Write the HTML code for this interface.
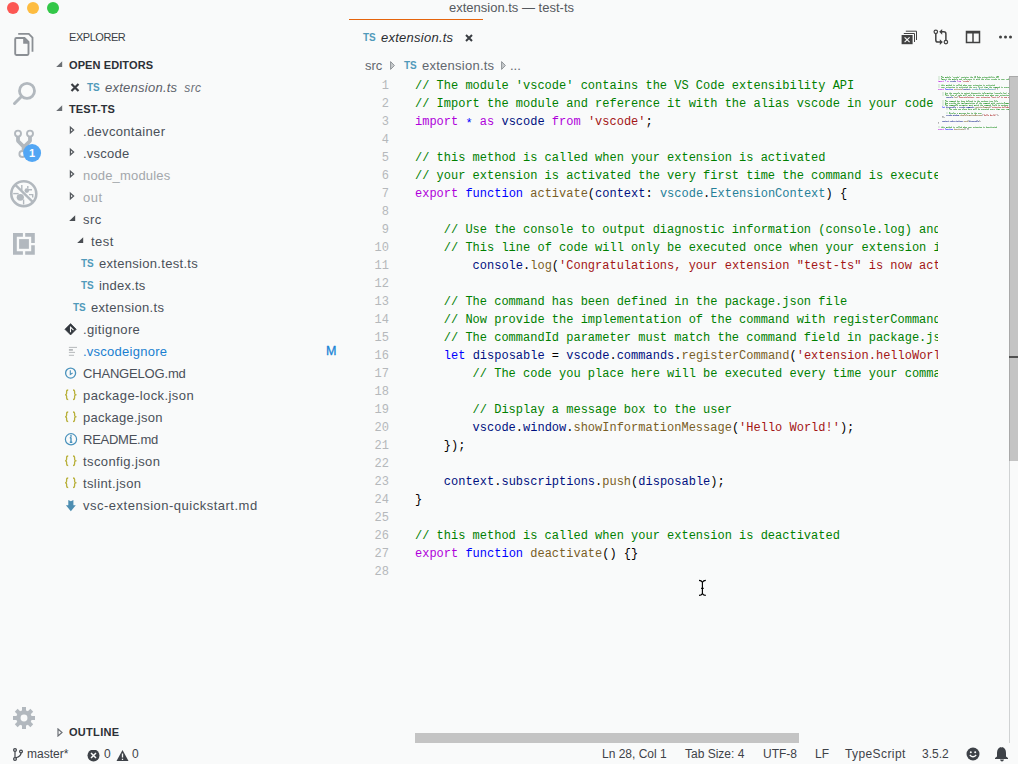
<!DOCTYPE html>
<html><head><meta charset="utf-8"><style>
html,body{margin:0;padding:0;}
body{width:1018px;height:764px;overflow:hidden;background:#f9fafa;position:relative;font-family:"Liberation Sans",sans-serif;}
.abs{position:absolute;}
.row{position:absolute;height:22px;line-height:22px;font-size:13px;white-space:nowrap;letter-spacing:0.3px}
.ts{position:absolute;height:22px;line-height:22px;font-size:10px;font-weight:bold;color:#519aba;letter-spacing:-0.2px}
.js{position:absolute;height:22px;line-height:22px;font-size:11px;font-weight:bold;color:#bcb33e;letter-spacing:-0.5px}
.cl{position:absolute;left:415px;height:18px;line-height:18px;font-family:"Liberation Mono",monospace;font-size:12px;white-space:pre;}
.ln{position:absolute;left:340px;width:49px;text-align:right;height:18px;line-height:18px;font-family:"Liberation Mono",monospace;font-size:12px;color:#b5b8bb}
.st{position:absolute;top:744px;height:20px;line-height:20px;font-size:12px;color:#3e4248;white-space:nowrap}
</style></head><body>
<!-- traffic lights -->
<div class="abs" style="left:7px;top:2px;width:12px;height:12px;border-radius:50%;background:#fc5753"></div>
<div class="abs" style="left:27px;top:2px;width:12px;height:12px;border-radius:50%;background:#fdbc40"></div>
<div class="abs" style="left:47px;top:2px;width:12px;height:12px;border-radius:50%;background:#33c748"></div>
<!-- title -->
<div class="abs" style="left:449px;top:-2px;height:20px;line-height:20px;font-size:13px;color:#55595e;white-space:nowrap">extension.ts — test-ts</div>
<div class="abs" style="left:349px;top:19px;width:134px;height:1px;background:#e5640c"></div>

<!-- activity bar -->
<svg class="abs" style="left:0;top:0" width="48" height="764" viewBox="0 0 48 764">
  <!-- files -->
  <path d="M18.2 33.9 H28.8 L32.5 37.6 V51.7" fill="none" stroke="#8b8f94" stroke-width="1.8"/>
  <path d="M16.4 38 H24.5 L28.5 42 V53.8 Q28.5 55 27.3 55 H16.4 Q15.2 55 15.2 53.8 V39.2 Q15.2 38 16.4 38 Z" fill="none" stroke="#8b8f94" stroke-width="1.9"/>
  <path d="M23.2 37.5 V43.8 H29.4 Z" fill="#8b8f94"/>
  <!-- search -->
  <circle cx="27" cy="90.9" r="7.5" fill="none" stroke="#b2b8be" stroke-width="2.8"/>
  <path d="M21.5 96.5 L14.5 103.5" stroke="#b2b8be" stroke-width="3" stroke-linecap="round"/>
  <!-- scm -->
  <g fill="none" stroke="#b2b8be" stroke-width="1.9">
    <circle cx="18" cy="133.6" r="3"/>
    <circle cx="30" cy="133.6" r="3"/>
    <circle cx="22.4" cy="154" r="3"/>
  </g>
  <path d="M18 136.5 V141 L23.6 146.6 V151 M30 136.5 V141 L23.6 147.4" fill="none" stroke="#b2b8be" stroke-width="3.8" stroke-linejoin="bevel"/>
  <circle cx="32.1" cy="153" r="9" fill="#52a6f4"/>
  <text x="32.1" y="157" font-family="Liberation Sans" font-weight="bold" font-size="11" fill="#fff" text-anchor="middle">1</text>
  <!-- debug -->
  <circle cx="23.8" cy="193.7" r="12.5" fill="none" stroke="#b2b8be" stroke-width="2.6"/>
  <path d="M15.6 185.2 L32.4 201.6" stroke="#b2b8be" stroke-width="2.4"/>
  <g fill="#b2b8be">
    <ellipse cx="20.3" cy="197.3" rx="3.6" ry="3.4"/>
    <ellipse cx="26.8" cy="190.6" rx="2.3" ry="2.3"/>
  </g>
  <g fill="none" stroke="#b2b8be" stroke-width="1.4">
    <path d="M13.2 193.6 H18.6"/>
    <path d="M23.6 199.5 V204.5"/>
    <path d="M21.8 185 V190.2"/>
    <path d="M27.8 186 V188.5 M27.5 189.7 H32"/>
    <path d="M29 194.6 H32.7 V197.5"/>
  </g>
  <!-- extensions -->
  <g fill="#b2b8be">
    <path d="M13 233 H22.9 V236.8 H16.8 V251.2 H22.9 V254.8 H13 Z"/>
    <path d="M25.2 233 H34.8 V242.9 H31.2 V236.8 H25.2 Z"/>
    <path d="M31.2 245.2 H34.8 V254.8 H25.2 V251.2 H31.2 Z"/>
    <rect x="19.1" y="239.1" width="9.8" height="9.7"/>
  </g>
  <!-- gear -->
  <g fill="#b2b8be" transform="translate(24 718)">
    <circle r="7.8"/>
    <rect x="-2" y="-11" width="4" height="22"/>
    <rect x="-2" y="-11" width="4" height="22" transform="rotate(45)"/>
    <rect x="-2" y="-11" width="4" height="22" transform="rotate(90)"/>
    <rect x="-2" y="-11" width="4" height="22" transform="rotate(135)"/>
  </g>
  <circle cx="24" cy="718" r="3.45" fill="#f9fafa"/>
</svg>

<!-- sidebar -->
<div class="abs" style="left:69px;top:26px;height:22px;line-height:22px;font-size:11px;color:#3a3e44;letter-spacing:-0.45px">EXPLORER</div>
<div class="row" style="top:54px;left:69px;color:#2c3036;font-weight:bold;font-size:11px;letter-spacing:0.1px">OPEN EDITORS</div>
<svg class="abs" style="left:56px;top:61px" width="7" height="7" viewBox="0 0 7 7"><path d="M6.2 0.2 L6.2 6 L0.2 6 Z" fill="#6b6f74"/></svg>
<svg class="abs" style="left:70px;top:83px" width="10" height="9" viewBox="0 0 10 9"><path d="M1.5 1 L8.5 8 M8.5 1 L1.5 8" stroke="#3a3d42" stroke-width="2.2"/></svg>
<div class="ts" style="left:87px;top:77px">TS</div>
<div class="row" style="top:77px;left:105px;color:#5b6068;font-style:italic;letter-spacing:0.25px">extension.ts <span style="font-size:12px;color:#6b7078;margin-left:3px;letter-spacing:0.4px">src</span></div>
<div class="row" style="top:98px;left:69px;color:#2c3036;font-weight:bold;font-size:11px;letter-spacing:0.1px">TEST-TS</div>
<svg class="abs" style="left:56px;top:105px" width="7" height="7" viewBox="0 0 7 7"><path d="M6.2 0.2 L6.2 6 L0.2 6 Z" fill="#6b6f74"/></svg>
<div class="row" style="top:121px;left:83px;color:#4a5059;letter-spacing:0.33px;">.devcontainer</div>
<svg class="abs" style="left:69px;top:125px" width="6" height="10" viewBox="0 0 6 10"><path d="M1.4 2.2 L4.6 5 L1.4 7.8 Z" fill="none" stroke="#55595e" stroke-width="1.25" stroke-linejoin="miter"/></svg>
<div class="row" style="top:143px;left:83px;color:#4a5059;letter-spacing:0.25px;">.vscode</div>
<svg class="abs" style="left:69px;top:147px" width="6" height="10" viewBox="0 0 6 10"><path d="M1.4 2.2 L4.6 5 L1.4 7.8 Z" fill="none" stroke="#55595e" stroke-width="1.25" stroke-linejoin="miter"/></svg>
<div class="row" style="top:165px;left:83px;color:#a3a7ab;letter-spacing:0.17px;">node_modules</div>
<svg class="abs" style="left:69px;top:169px" width="6" height="10" viewBox="0 0 6 10"><path d="M1.4 2.2 L4.6 5 L1.4 7.8 Z" fill="none" stroke="#55595e" stroke-width="1.25" stroke-linejoin="miter"/></svg>
<div class="row" style="top:187px;left:83px;color:#a3a7ab;letter-spacing:0.5px;">out</div>
<svg class="abs" style="left:69px;top:191px" width="6" height="10" viewBox="0 0 6 10"><path d="M1.4 2.2 L4.6 5 L1.4 7.8 Z" fill="none" stroke="#55595e" stroke-width="1.25" stroke-linejoin="miter"/></svg>
<div class="row" style="top:209px;left:83px;color:#4a5059;letter-spacing:0.45px;">src</div>
<svg class="abs" style="left:69px;top:215px" width="7" height="7" viewBox="0 0 7 7"><path d="M6.2 0.2 L6.2 6 L0.2 6 Z" fill="#4a4e53"/></svg>
<div class="row" style="top:231px;left:91px;color:#4a5059;letter-spacing:0.45px;">test</div>
<svg class="abs" style="left:77px;top:237px" width="7" height="7" viewBox="0 0 7 7"><path d="M6.2 0.2 L6.2 6 L0.2 6 Z" fill="#4a4e53"/></svg>
<div class="row" style="top:253px;left:99px;color:#4a5059;letter-spacing:0.3px;">extension.test.ts</div>
<div class="ts" style="left:81px;top:253px">TS</div>
<div class="row" style="top:275px;left:99px;color:#4a5059;letter-spacing:0.21px;">index.ts</div>
<div class="ts" style="left:81px;top:275px">TS</div>
<div class="row" style="top:297px;left:91px;color:#4a5059;letter-spacing:0.32px;">extension.ts</div>
<div class="ts" style="left:73px;top:297px">TS</div>
<div class="row" style="top:319px;left:83px;color:#4a5059;letter-spacing:0.37px;">.gitignore</div>
<svg class="abs" style="left:64px;top:321px" width="14" height="20" viewBox="0 0 14 20"><path d="M6.6 2.6 L12.3 8.3 L6.6 14 L0.9 8.3 Z" fill="#33383e" stroke="#33383e" stroke-width="0.6" stroke-linejoin="round"/><path d="M6.5 5.6 V11.2 M6.5 6.2 L9.5 9.2" stroke="#f9fafa" stroke-width="1.1"/></svg>
<div class="row" style="top:341px;left:83px;color:#1a7fd0;letter-spacing:0.25px;">.vscodeignore</div>
<svg class="abs" style="left:68px;top:342px" width="10" height="22" viewBox="0 0 10 22"><path d="M0.9 5.4 H9 M0.9 10.4 H7 M0.9 13.3 H6" stroke="#aeb1b4" stroke-width="0.9"/><path d="M0.9 7.9 H4.9" stroke="#aeb1b4" stroke-width="1.6"/></svg>
<div class="row" style="top:340px;left:326px;color:#1a84d6;font-size:12.5px;font-weight:normal;-webkit-text-stroke:0.3px #1a84d6">M</div>
<div class="row" style="top:363px;left:83px;color:#4a5059;letter-spacing:-0.18px;">CHANGELOG.md</div>
<svg class="abs" style="left:64px;top:362px" width="14" height="22" viewBox="0 0 14 22"><circle cx="6.6" cy="11.1" r="5" fill="none" stroke="#4a92bc" stroke-width="1.3"/><path d="M6.3 8.2 V12.4 L8.6 11" fill="none" stroke="#4a92bc" stroke-width="1.1"/></svg>
<div class="row" style="top:385px;left:83px;color:#4a5059;letter-spacing:0.41px;">package-lock.json</div>
<svg class="abs" style="left:65px;top:384px" width="12" height="22" viewBox="0 0 12 22"><path d="M3.2 3.6 Q1.6 3.6 1.6 5 V6.6 Q1.6 7.6 0.6 8 Q1.6 8.4 1.6 9.4 V11 Q1.6 12.4 3.2 12.4 M8 3.6 Q9.6 3.6 9.6 5 V6.6 Q9.6 7.6 10.6 8 Q9.6 8.4 9.6 9.4 V11 Q9.6 12.4 8 12.4" fill="none" stroke="#b8b03a" stroke-width="1.3" transform="translate(0 2) scale(1 1.1)"/></svg>
<div class="row" style="top:407px;left:83px;color:#4a5059;letter-spacing:0.26px;">package.json</div>
<svg class="abs" style="left:65px;top:406px" width="12" height="22" viewBox="0 0 12 22"><path d="M3.2 3.6 Q1.6 3.6 1.6 5 V6.6 Q1.6 7.6 0.6 8 Q1.6 8.4 1.6 9.4 V11 Q1.6 12.4 3.2 12.4 M8 3.6 Q9.6 3.6 9.6 5 V6.6 Q9.6 7.6 10.6 8 Q9.6 8.4 9.6 9.4 V11 Q9.6 12.4 8 12.4" fill="none" stroke="#b8b03a" stroke-width="1.3" transform="translate(0 2) scale(1 1.1)"/></svg>
<div class="row" style="top:429px;left:83px;color:#4a5059;letter-spacing:-0.26px;">README.md</div>
<svg class="abs" style="left:64px;top:428px" width="14" height="22" viewBox="0 0 14 22"><circle cx="7" cy="11.3" r="5.6" fill="none" stroke="#4a92bc" stroke-width="1.2"/><path d="M7 9.6 V14.4 M5.8 9.8 H7.2 M5.8 14.3 H8.3" stroke="#4a92bc" stroke-width="1.4"/><circle cx="7" cy="7.9" r="0.9" fill="#4a92bc"/></svg>
<div class="row" style="top:451px;left:83px;color:#4a5059;letter-spacing:0.39px;">tsconfig.json</div>
<svg class="abs" style="left:65px;top:450px" width="12" height="22" viewBox="0 0 12 22"><path d="M3.2 3.6 Q1.6 3.6 1.6 5 V6.6 Q1.6 7.6 0.6 8 Q1.6 8.4 1.6 9.4 V11 Q1.6 12.4 3.2 12.4 M8 3.6 Q9.6 3.6 9.6 5 V6.6 Q9.6 7.6 10.6 8 Q9.6 8.4 9.6 9.4 V11 Q9.6 12.4 8 12.4" fill="none" stroke="#b8b03a" stroke-width="1.3" transform="translate(0 2) scale(1 1.1)"/></svg>
<div class="row" style="top:473px;left:83px;color:#4a5059;letter-spacing:0.38px;">tslint.json</div>
<svg class="abs" style="left:65px;top:472px" width="12" height="22" viewBox="0 0 12 22"><path d="M3.2 3.6 Q1.6 3.6 1.6 5 V6.6 Q1.6 7.6 0.6 8 Q1.6 8.4 1.6 9.4 V11 Q1.6 12.4 3.2 12.4 M8 3.6 Q9.6 3.6 9.6 5 V6.6 Q9.6 7.6 10.6 8 Q9.6 8.4 9.6 9.4 V11 Q9.6 12.4 8 12.4" fill="none" stroke="#b8b03a" stroke-width="1.3" transform="translate(0 2) scale(1 1.1)"/></svg>
<div class="row" style="top:495px;left:83px;color:#4a5059;letter-spacing:0.5px;">vsc-extension-quickstart.md</div>
<svg class="abs" style="left:64px;top:494px" width="14" height="22" viewBox="0 0 14 22"><path d="M4.3 6 L6.85 7.3 L9.4 6 V11.3 H11.8 L6.85 17.2 L1.9 11.3 H4.3 Z" fill="#4d8eb2"/></svg>
<svg class="abs" style="left:57px;top:728px" width="6" height="9" viewBox="0 0 6 9"><path d="M1 1 L5 4.5 L1 8 Z" fill="none" stroke="#6c7076" stroke-width="1.2"/></svg>
<div class="abs" style="left:69px;top:721px;height:22px;line-height:22px;font-size:11px;font-weight:bold;color:#2c3036;letter-spacing:0.3px">OUTLINE</div>

<!-- tab -->
<div class="ts" style="left:363px;top:27px">TS</div>
<div class="abs" style="left:381px;top:27px;height:22px;line-height:22px;font-size:13px;font-style:italic;color:#2a2d31;letter-spacing:0.25px">extension.ts</div>
<svg class="abs" style="left:465px;top:34px" width="8" height="8" viewBox="0 0 8 8"><path d="M1 1 L7 7 M7 1 L1 7" stroke="#3a3d42" stroke-width="2"/></svg>

<!-- breadcrumbs -->
<div class="abs" style="left:365px;top:55px;height:22px;line-height:22px;font-size:13px;color:#62676e">src</div>
<svg class="abs" style="left:390px;top:61px" width="5" height="9" viewBox="0 0 5 9"><path d="M0.6 0.6 L4.4 4.5 L0.6 8.4 Z" fill="#c9ccce" stroke="#8f9398" stroke-width="1"/></svg>
<div class="ts" style="left:404px;top:55px">TS</div>
<div class="abs" style="left:422px;top:55px;height:22px;line-height:22px;font-size:13px;color:#62676e;letter-spacing:0.25px">extension.ts</div>
<svg class="abs" style="left:501px;top:61px" width="5" height="9" viewBox="0 0 5 9"><path d="M0.6 0.6 L4.4 4.5 L0.6 8.4 Z" fill="#c9ccce" stroke="#8f9398" stroke-width="1"/></svg>
<div class="abs" style="left:510px;top:55px;height:22px;line-height:22px;font-size:13px;color:#62676e">...</div>

<!-- editor actions -->
<svg class="abs" style="left:895px;top:25px" width="123" height="25" viewBox="0 0 123 25">
  <g fill="none" stroke="#424242" stroke-width="1">
    <path d="M8.8 8.5 H19.5 V17"/>
    <path d="M10.8 6.2 H21.5 V15"/>
  </g>
  <rect x="6.6" y="10" width="11" height="9.2" fill="#424242"/>
  <path d="M9.6 12.3 L14.6 17.1 M14.6 12.3 L9.6 17.1" stroke="#f9fafa" stroke-width="1.1"/>
  <g fill="none" stroke="#424242" stroke-width="1.5">
    <path d="M40.8 8.6 V15 Q40.8 17.1 42.9 17.1 H45.5"/>
    <path d="M50.9 15.3 V8.9 Q50.9 6.8 48.8 6.8 H46.5"/>
  </g>
  <circle cx="40.8" cy="6.8" r="1.75" fill="#f9fafa" stroke="#424242" stroke-width="1.2"/>
  <circle cx="50.9" cy="17.1" r="1.75" fill="#f9fafa" stroke="#424242" stroke-width="1.2"/>
  <path d="M44.8 14.2 L47.8 17.1 L44.8 20 Z" fill="#424242"/>
  <path d="M47.2 3.9 L44.2 6.8 L47.2 9.7 Z" fill="#424242"/>
  <rect x="71.5" y="6.5" width="13" height="11" fill="none" stroke="#424242" stroke-width="1.5"/>
  <rect x="71" y="6" width="14" height="2.5" fill="#424242"/>
  <path d="M78 7 V17.5" stroke="#424242" stroke-width="1.5"/>
  <circle cx="105.5" cy="12" r="1.5" fill="#424242"/>
  <circle cx="110.5" cy="12" r="1.5" fill="#424242"/>
  <circle cx="115.5" cy="12" r="1.5" fill="#424242"/>
</svg>

<!-- code -->
<div class="ln" style="top:77px">1</div><div class="ln" style="top:95px">2</div><div class="ln" style="top:113px">3</div><div class="ln" style="top:131px">4</div><div class="ln" style="top:149px">5</div><div class="ln" style="top:167px">6</div><div class="ln" style="top:185px">7</div><div class="ln" style="top:203px">8</div><div class="ln" style="top:221px">9</div><div class="ln" style="top:239px">10</div><div class="ln" style="top:257px">11</div><div class="ln" style="top:275px">12</div><div class="ln" style="top:293px">13</div><div class="ln" style="top:311px">14</div><div class="ln" style="top:329px">15</div><div class="ln" style="top:347px">16</div><div class="ln" style="top:365px">17</div><div class="ln" style="top:383px">18</div><div class="ln" style="top:401px">19</div><div class="ln" style="top:419px">20</div><div class="ln" style="top:437px">21</div><div class="ln" style="top:455px">22</div><div class="ln" style="top:473px">23</div><div class="ln" style="top:491px">24</div><div class="ln" style="top:509px">25</div><div class="ln" style="top:527px">26</div><div class="ln" style="top:545px">27</div><div class="ln" style="top:563px">28</div>
<div class="abs" style="left:405px;top:76px;width:533px;height:660px;overflow:hidden">
<div style="position:absolute;left:-405px;top:-76px;width:1018px;height:764px">
<div class="cl" style="top:77px"><span style="color:#008000">// The module &#x27;vscode&#x27; contains the VS Code extensibility API</span></div><div class="cl" style="top:95px"><span style="color:#008000">// Import the module and reference it with the alias vscode in your code below</span></div><div class="cl" style="top:113px"><span style="color:#af00db">import</span><span style="color:#000000"> </span><span style="color:#0000ff;position:relative;top:2px">*</span><span style="color:#000000"> </span><span style="color:#af00db">as</span><span style="color:#000000"> </span><span style="color:#001080">vscode</span><span style="color:#000000"> </span><span style="color:#af00db">from</span><span style="color:#000000"> </span><span style="color:#a31515">&#x27;vscode&#x27;</span><span style="color:#000000">;</span></div><div class="cl" style="top:131px"></div><div class="cl" style="top:149px"><span style="color:#008000">// this method is called when your extension is activated</span></div><div class="cl" style="top:167px"><span style="color:#008000">// your extension is activated the very first time the command is executed</span></div><div class="cl" style="top:185px"><span style="color:#af00db">export</span><span style="color:#000000"> </span><span style="color:#0000ff">function</span><span style="color:#000000"> </span><span style="color:#795e26">activate</span><span style="color:#000000">(</span><span style="color:#001080">context</span><span style="color:#000000">: </span><span style="color:#267f99">vscode</span><span style="color:#000000">.</span><span style="color:#267f99">ExtensionContext</span><span style="color:#000000">) {</span></div><div class="cl" style="top:203px"></div><div class="cl" style="top:221px"><span style="color:#000000">    </span><span style="color:#008000">// Use the console to output diagnostic information (console.log) and errors (console.error)</span></div><div class="cl" style="top:239px"><span style="color:#000000">    </span><span style="color:#008000">// This line of code will only be executed once when your extension is activated</span></div><div class="cl" style="top:257px"><span style="color:#000000">        </span><span style="color:#001080">console</span><span style="color:#000000">.</span><span style="color:#795e26">log</span><span style="color:#000000">(</span><span style="color:#a31515">&#x27;Congratulations, your extension &quot;test-ts&quot; is now active!&#x27;</span><span style="color:#000000">);</span></div><div class="cl" style="top:275px"></div><div class="cl" style="top:293px"><span style="color:#000000">    </span><span style="color:#008000">// The command has been defined in the package.json file</span></div><div class="cl" style="top:311px"><span style="color:#000000">    </span><span style="color:#008000">// Now provide the implementation of the command with registerCommand</span></div><div class="cl" style="top:329px"><span style="color:#000000">    </span><span style="color:#008000">// The commandId parameter must match the command field in package.json</span></div><div class="cl" style="top:347px"><span style="color:#000000">    </span><span style="color:#0000ff">let</span><span style="color:#000000"> </span><span style="color:#001080">disposable</span><span style="color:#000000"> = </span><span style="color:#001080">vscode</span><span style="color:#000000">.</span><span style="color:#001080">commands</span><span style="color:#000000">.</span><span style="color:#795e26">registerCommand</span><span style="color:#000000">(</span><span style="color:#a31515">&#x27;extension.helloWorld&#x27;</span><span style="color:#000000">, () =&gt; {</span></div><div class="cl" style="top:365px"><span style="color:#000000">        </span><span style="color:#008000">// The code you place here will be executed every time your command is executed</span></div><div class="cl" style="top:383px"></div><div class="cl" style="top:401px"><span style="color:#000000">        </span><span style="color:#008000">// Display a message box to the user</span></div><div class="cl" style="top:419px"><span style="color:#000000">        </span><span style="color:#001080">vscode</span><span style="color:#000000">.</span><span style="color:#001080">window</span><span style="color:#000000">.</span><span style="color:#795e26">showInformationMessage</span><span style="color:#000000">(</span><span style="color:#a31515">&#x27;Hello World!&#x27;</span><span style="color:#000000">);</span></div><div class="cl" style="top:437px"><span style="color:#000000">    </span><span style="color:#000000">});</span></div><div class="cl" style="top:455px"></div><div class="cl" style="top:473px"><span style="color:#000000">    </span><span style="color:#001080">context</span><span style="color:#000000">.</span><span style="color:#001080">subscriptions</span><span style="color:#000000">.</span><span style="color:#795e26">push</span><span style="color:#000000">(</span><span style="color:#001080">disposable</span><span style="color:#000000">);</span></div><div class="cl" style="top:491px"><span style="color:#000000">}</span></div><div class="cl" style="top:509px"></div><div class="cl" style="top:527px"><span style="color:#008000">// this method is called when your extension is deactivated</span></div><div class="cl" style="top:545px"><span style="color:#af00db">export</span><span style="color:#000000"> </span><span style="color:#0000ff">function</span><span style="color:#000000"> </span><span style="color:#795e26">deactivate</span><span style="color:#000000">() {}</span></div><div class="cl" style="top:563px"></div>
</div></div>

<!-- minimap -->
<svg class="abs" style="left:0;top:0" width="1018" height="764" viewBox="0 0 1018 764" shape-rendering="crispEdges"><path fill="#000000" fill-opacity="0.1" d="M978 89h1v1h-1zM953 97h1v1h-1zM965 107h1v1h-1zM974 107h1v1h-1zM952 115h1v1h-1zM959 115h1v1h-1zM949 121h1v1h-1zM963 121h1v1h-1z"/><path fill="#000000" fill-opacity="0.2" d="M970 81h1v1h-1zM962 88h1v1h-1zM962 89h1v1h-1zM970 89h1v1h-1zM995 88h1v1h-1zM995 89h1v1h-1zM997 89h1v1h-1zM957 96h1v1h-1zM957 97h1v1h-1zM990 106h1v1h-1zM990 107h1v1h-1zM982 114h1v1h-1zM982 115h1v1h-1zM997 114h1v1h-1zM997 115h1v1h-1zM998 115h1v1h-1zM942 117h1v1h-1zM943 116h1v1h-1zM943 117h1v1h-1zM944 117h1v1h-1zM968 120h1v1h-1zM968 121h1v1h-1zM979 120h1v1h-1zM979 121h1v1h-1zM980 121h1v1h-1zM938 123h1v1h-1zM964 128h1v1h-1zM964 129h1v1h-1zM965 128h1v1h-1zM965 129h1v1h-1zM967 129h1v1h-1zM968 129h1v1h-1z"/><path fill="#000000" fill-opacity="0.3" d="M997 88h1v1h-1zM957 107h1v1h-1zM942 116h1v1h-1zM938 122h1v1h-1zM967 128h1v1h-1zM968 128h1v1h-1z"/><path fill="#0000ff" fill-opacity="0.1" d="M945 81h1v1h-1zM949 88h1v1h-1zM950 88h1v1h-1zM944 106h1v1h-1zM949 128h1v1h-1zM950 128h1v1h-1z"/><path fill="#0000ff" fill-opacity="0.3" d="M945 89h1v1h-1zM942 106h1v1h-1zM942 107h1v1h-1zM945 129h1v1h-1z"/><path fill="#0000ff" fill-opacity="0.4" d="M945 80h1v1h-1zM945 88h1v1h-1zM948 89h1v1h-1zM949 89h1v1h-1zM950 89h1v1h-1zM944 107h1v1h-1zM945 128h1v1h-1zM948 129h1v1h-1zM949 129h1v1h-1zM950 129h1v1h-1z"/><path fill="#0000ff" fill-opacity="0.5" d="M946 89h1v1h-1zM947 89h1v1h-1zM951 89h1v1h-1zM952 89h1v1h-1zM943 107h1v1h-1zM946 129h1v1h-1zM947 129h1v1h-1zM951 129h1v1h-1zM952 129h1v1h-1z"/><path fill="#001080" fill-opacity="0.1" d="M966 88h1v1h-1zM969 88h1v1h-1zM947 106h1v1h-1zM954 114h1v1h-1zM945 120h1v1h-1zM948 120h1v1h-1zM956 120h1v1h-1zM958 120h1v1h-1zM959 120h1v1h-1zM970 120h1v1h-1z"/><path fill="#001080" fill-opacity="0.2" d="M954 80h1v1h-1zM946 106h1v1h-1zM953 106h1v1h-1zM963 106h1v1h-1zM972 106h1v1h-1zM950 114h1v1h-1zM956 114h1v1h-1zM952 120h1v1h-1zM969 120h1v1h-1zM976 120h1v1h-1z"/><path fill="#001080" fill-opacity="0.3" d="M951 96h1v1h-1zM951 97h1v1h-1zM954 106h1v1h-1zM954 107h1v1h-1zM955 121h1v1h-1zM977 120h1v1h-1zM977 121h1v1h-1z"/><path fill="#001080" fill-opacity="0.4" d="M950 81h1v1h-1zM951 81h1v1h-1zM952 81h1v1h-1zM963 89h1v1h-1zM966 89h1v1h-1zM968 89h1v1h-1zM969 89h1v1h-1zM946 97h1v1h-1zM949 97h1v1h-1zM947 107h1v1h-1zM948 107h1v1h-1zM951 107h1v1h-1zM959 107h1v1h-1zM960 107h1v1h-1zM961 107h1v1h-1zM966 107h1v1h-1zM973 107h1v1h-1zM946 115h1v1h-1zM947 115h1v1h-1zM948 115h1v1h-1zM954 115h1v1h-1zM942 121h1v1h-1zM945 121h1v1h-1zM947 121h1v1h-1zM948 121h1v1h-1zM950 121h1v1h-1zM953 121h1v1h-1zM954 121h1v1h-1zM956 121h1v1h-1zM958 121h1v1h-1zM959 121h1v1h-1zM962 121h1v1h-1zM970 121h1v1h-1zM971 121h1v1h-1zM974 121h1v1h-1z"/><path fill="#001080" fill-opacity="0.5" d="M953 81h1v1h-1zM954 81h1v1h-1zM955 81h1v1h-1zM964 89h1v1h-1zM965 89h1v1h-1zM967 89h1v1h-1zM947 97h1v1h-1zM948 97h1v1h-1zM950 97h1v1h-1zM952 97h1v1h-1zM946 107h1v1h-1zM949 107h1v1h-1zM950 107h1v1h-1zM952 107h1v1h-1zM953 107h1v1h-1zM955 107h1v1h-1zM962 107h1v1h-1zM963 107h1v1h-1zM964 107h1v1h-1zM967 107h1v1h-1zM970 107h1v1h-1zM971 107h1v1h-1zM972 107h1v1h-1zM949 115h1v1h-1zM950 115h1v1h-1zM951 115h1v1h-1zM955 115h1v1h-1zM956 115h1v1h-1zM957 115h1v1h-1zM943 121h1v1h-1zM944 121h1v1h-1zM946 121h1v1h-1zM951 121h1v1h-1zM952 121h1v1h-1zM957 121h1v1h-1zM960 121h1v1h-1zM961 121h1v1h-1zM969 121h1v1h-1zM972 121h1v1h-1zM973 121h1v1h-1zM975 121h1v1h-1zM976 121h1v1h-1zM978 121h1v1h-1z"/><path fill="#001080" fill-opacity="0.6" d="M953 115h1v1h-1zM958 115h1v1h-1z"/><path fill="#001080" fill-opacity="0.7" d="M968 107h1v1h-1zM969 107h1v1h-1z"/><path fill="#008000" fill-opacity="0.1" d="M938 76h1v1h-1zM938 77h1v1h-1zM939 76h1v1h-1zM939 77h1v1h-1zM964 76h1v1h-1zM966 76h1v1h-1zM970 76h1v1h-1zM984 76h1v1h-1zM988 76h1v1h-1zM990 76h1v1h-1zM992 76h1v1h-1zM993 76h1v1h-1zM938 78h1v1h-1zM938 79h1v1h-1zM939 78h1v1h-1zM939 79h1v1h-1zM946 78h1v1h-1zM948 78h1v1h-1zM973 78h1v1h-1zM974 78h1v1h-1zM977 78h1v1h-1zM978 78h1v1h-1zM981 78h1v1h-1zM987 78h1v1h-1zM998 78h1v1h-1zM938 84h1v1h-1zM938 85h1v1h-1zM939 84h1v1h-1zM939 85h1v1h-1zM941 84h1v1h-1zM943 84h1v1h-1zM948 84h1v1h-1zM953 84h1v1h-1zM975 84h1v1h-1zM979 84h1v1h-1zM983 84h1v1h-1zM988 84h1v1h-1zM989 84h1v1h-1zM992 84h1v1h-1zM938 86h1v1h-1zM938 87h1v1h-1zM939 86h1v1h-1zM939 87h1v1h-1zM948 86h1v1h-1zM952 86h1v1h-1zM956 86h1v1h-1zM961 86h1v1h-1zM962 86h1v1h-1zM965 86h1v1h-1zM969 86h1v1h-1zM979 86h1v1h-1zM982 86h1v1h-1zM984 86h1v1h-1zM985 86h1v1h-1zM989 86h1v1h-1zM1001 86h1v1h-1zM942 92h1v1h-1zM942 93h1v1h-1zM943 92h1v1h-1zM943 93h1v1h-1zM949 92h1v1h-1zM961 92h1v1h-1zM966 92h1v1h-1zM969 92h1v1h-1zM972 92h1v1h-1zM978 92h1v1h-1zM979 92h1v1h-1zM982 92h1v1h-1zM989 92h1v1h-1zM990 92h1v1h-1zM1002 93h1v1h-1zM942 94h1v1h-1zM942 95h1v1h-1zM943 94h1v1h-1zM943 95h1v1h-1zM947 94h1v1h-1zM951 94h1v1h-1zM964 94h1v1h-1zM981 94h1v1h-1zM1002 94h1v1h-1zM1006 94h1v1h-1zM942 100h1v1h-1zM942 101h1v1h-1zM943 100h1v1h-1zM943 101h1v1h-1zM969 100h1v1h-1zM974 100h1v1h-1zM977 100h1v1h-1zM988 101h1v1h-1zM989 100h1v1h-1zM995 100h1v1h-1zM942 102h1v1h-1zM942 103h1v1h-1zM943 102h1v1h-1zM943 103h1v1h-1zM953 102h1v1h-1zM957 102h1v1h-1zM961 102h1v1h-1zM969 102h1v1h-1zM971 102h1v1h-1zM972 102h1v1h-1zM979 102h1v1h-1zM992 102h1v1h-1zM993 102h1v1h-1zM999 102h1v1h-1zM1001 102h1v1h-1zM942 104h1v1h-1zM942 105h1v1h-1zM943 104h1v1h-1zM943 105h1v1h-1zM965 104h1v1h-1zM972 104h1v1h-1zM976 104h1v1h-1zM980 104h1v1h-1zM993 104h1v1h-1zM998 104h1v1h-1zM1008 105h1v1h-1zM946 108h1v1h-1zM946 109h1v1h-1zM947 108h1v1h-1zM947 109h1v1h-1zM974 108h1v1h-1zM986 108h1v1h-1zM996 108h1v1h-1zM997 108h1v1h-1zM946 112h1v1h-1zM946 113h1v1h-1zM947 112h1v1h-1zM947 113h1v1h-1zM950 112h1v1h-1zM971 112h1v1h-1zM974 112h1v1h-1zM938 126h1v1h-1zM938 127h1v1h-1zM939 126h1v1h-1zM939 127h1v1h-1zM941 126h1v1h-1zM943 126h1v1h-1zM948 126h1v1h-1zM953 126h1v1h-1zM975 126h1v1h-1zM979 126h1v1h-1zM983 126h1v1h-1zM990 126h1v1h-1zM991 126h1v1h-1zM994 126h1v1h-1z"/><path fill="#008000" fill-opacity="0.2" d="M941 77h1v1h-1zM942 76h1v1h-1zM947 76h1v1h-1zM952 76h1v1h-1zM957 76h1v1h-1zM959 76h1v1h-1zM971 76h1v1h-1zM979 76h1v1h-1zM989 76h1v1h-1zM949 78h1v1h-1zM954 78h1v1h-1zM961 78h1v1h-1zM979 78h1v1h-1zM982 78h1v1h-1zM995 78h1v1h-1zM1008 78h1v1h-1zM942 84h1v1h-1zM949 84h1v1h-1zM951 84h1v1h-1zM961 84h1v1h-1zM964 84h1v1h-1zM994 84h1v1h-1zM967 86h1v1h-1zM970 86h1v1h-1zM990 86h1v1h-1zM999 86h1v1h-1zM950 92h1v1h-1zM971 92h1v1h-1zM994 92h1v1h-1zM994 93h1v1h-1zM1006 92h1v1h-1zM1006 93h1v1h-1zM945 95h1v1h-1zM946 94h1v1h-1zM960 94h1v1h-1zM973 94h1v1h-1zM983 94h1v1h-1zM991 94h1v1h-1zM945 101h1v1h-1zM946 100h1v1h-1zM955 100h1v1h-1zM957 100h1v1h-1zM961 100h1v1h-1zM966 100h1v1h-1zM972 100h1v1h-1zM978 100h1v1h-1zM984 100h1v1h-1zM954 102h1v1h-1zM958 102h1v1h-1zM980 102h1v1h-1zM989 102h1v1h-1zM994 102h1v1h-1zM945 105h1v1h-1zM946 104h1v1h-1zM955 104h1v1h-1zM957 104h1v1h-1zM978 104h1v1h-1zM981 104h1v1h-1zM990 104h1v1h-1zM996 104h1v1h-1zM1004 104h1v1h-1zM949 109h1v1h-1zM950 108h1v1h-1zM955 108h1v1h-1zM968 108h1v1h-1zM978 108h1v1h-1zM988 108h1v1h-1zM967 112h1v1h-1zM975 112h1v1h-1zM942 126h1v1h-1zM949 126h1v1h-1zM951 126h1v1h-1zM961 126h1v1h-1zM964 126h1v1h-1zM986 126h1v1h-1zM996 126h1v1h-1z"/><path fill="#008000" fill-opacity="0.3" d="M949 76h1v1h-1zM949 77h1v1h-1zM974 76h1v1h-1zM991 76h1v1h-1zM991 77h1v1h-1zM996 76h1v1h-1zM998 77h1v1h-1zM941 79h1v1h-1zM945 79h1v1h-1zM956 78h1v1h-1zM956 79h1v1h-1zM963 79h1v1h-1zM965 79h1v1h-1zM967 79h1v1h-1zM986 78h1v1h-1zM986 79h1v1h-1zM1004 79h1v1h-1zM958 84h1v1h-1zM958 85h1v1h-1zM959 84h1v1h-1zM959 85h1v1h-1zM971 85h1v1h-1zM944 87h1v1h-1zM975 87h1v1h-1zM978 87h1v1h-1zM980 87h1v1h-1zM945 92h1v1h-1zM958 92h1v1h-1zM958 93h1v1h-1zM984 93h1v1h-1zM986 93h1v1h-1zM1000 92h1v1h-1zM1000 93h1v1h-1zM1003 92h1v1h-1zM1003 93h1v1h-1zM950 94h1v1h-1zM950 95h1v1h-1zM956 95h1v1h-1zM965 94h1v1h-1zM965 95h1v1h-1zM966 94h1v1h-1zM966 95h1v1h-1zM970 94h1v1h-1zM970 95h1v1h-1zM998 95h1v1h-1zM968 101h1v1h-1zM989 101h1v1h-1zM994 101h1v1h-1zM996 100h1v1h-1zM996 101h1v1h-1zM950 103h1v1h-1zM964 102h1v1h-1zM964 103h1v1h-1zM977 103h1v1h-1zM996 103h1v1h-1zM1003 103h1v1h-1zM956 105h1v1h-1zM961 105h1v1h-1zM967 105h1v1h-1zM992 105h1v1h-1zM995 104h1v1h-1zM995 105h1v1h-1zM963 108h1v1h-1zM963 109h1v1h-1zM970 109h1v1h-1zM975 108h1v1h-1zM975 109h1v1h-1zM976 108h1v1h-1zM976 109h1v1h-1zM993 109h1v1h-1zM1004 109h1v1h-1zM953 112h1v1h-1zM953 113h1v1h-1zM981 113h1v1h-1zM958 126h1v1h-1zM958 127h1v1h-1zM959 126h1v1h-1zM959 127h1v1h-1zM971 127h1v1h-1z"/><path fill="#008000" fill-opacity="0.4" d="M953 77h1v1h-1zM954 77h1v1h-1zM955 77h1v1h-1zM961 77h1v1h-1zM964 77h1v1h-1zM966 77h1v1h-1zM968 77h1v1h-1zM970 77h1v1h-1zM974 77h1v1h-1zM977 77h1v1h-1zM983 77h1v1h-1zM984 77h1v1h-1zM987 77h1v1h-1zM988 77h1v1h-1zM990 77h1v1h-1zM992 77h1v1h-1zM993 77h1v1h-1zM994 77h1v1h-1zM997 77h1v1h-1zM946 79h1v1h-1zM948 79h1v1h-1zM965 78h1v1h-1zM970 79h1v1h-1zM973 79h1v1h-1zM974 79h1v1h-1zM977 79h1v1h-1zM978 79h1v1h-1zM981 79h1v1h-1zM987 79h1v1h-1zM989 79h1v1h-1zM991 79h1v1h-1zM992 79h1v1h-1zM993 79h1v1h-1zM998 79h1v1h-1zM1001 79h1v1h-1zM1006 79h1v1h-1zM941 85h1v1h-1zM943 85h1v1h-1zM944 85h1v1h-1zM948 85h1v1h-1zM953 85h1v1h-1zM954 85h1v1h-1zM956 85h1v1h-1zM968 85h1v1h-1zM974 85h1v1h-1zM975 85h1v1h-1zM978 85h1v1h-1zM979 85h1v1h-1zM983 85h1v1h-1zM984 85h1v1h-1zM987 85h1v1h-1zM988 85h1v1h-1zM989 85h1v1h-1zM990 85h1v1h-1zM992 85h1v1h-1zM941 87h1v1h-1zM947 87h1v1h-1zM948 87h1v1h-1zM951 87h1v1h-1zM952 87h1v1h-1zM956 87h1v1h-1zM957 87h1v1h-1zM960 87h1v1h-1zM961 87h1v1h-1zM962 87h1v1h-1zM963 87h1v1h-1zM965 87h1v1h-1zM969 87h1v1h-1zM973 87h1v1h-1zM976 87h1v1h-1zM978 86h1v1h-1zM979 87h1v1h-1zM981 87h1v1h-1zM982 87h1v1h-1zM984 87h1v1h-1zM985 87h1v1h-1zM989 87h1v1h-1zM993 87h1v1h-1zM1001 87h1v1h-1zM1002 87h1v1h-1zM1005 87h1v1h-1zM1007 87h1v1h-1zM946 93h1v1h-1zM949 93h1v1h-1zM953 93h1v1h-1zM956 93h1v1h-1zM961 93h1v1h-1zM966 93h1v1h-1zM969 93h1v1h-1zM972 93h1v1h-1zM977 93h1v1h-1zM978 93h1v1h-1zM979 93h1v1h-1zM980 93h1v1h-1zM982 93h1v1h-1zM984 92h1v1h-1zM989 93h1v1h-1zM990 93h1v1h-1zM995 93h1v1h-1zM998 93h1v1h-1zM947 95h1v1h-1zM948 95h1v1h-1zM951 95h1v1h-1zM956 94h1v1h-1zM958 95h1v1h-1zM964 95h1v1h-1zM971 95h1v1h-1zM977 95h1v1h-1zM979 95h1v1h-1zM981 95h1v1h-1zM987 95h1v1h-1zM995 95h1v1h-1zM1001 95h1v1h-1zM1002 95h1v1h-1zM1005 95h1v1h-1zM1006 95h1v1h-1zM949 101h1v1h-1zM959 101h1v1h-1zM968 100h1v1h-1zM969 101h1v1h-1zM974 101h1v1h-1zM977 101h1v1h-1zM983 101h1v1h-1zM990 101h1v1h-1zM994 100h1v1h-1zM995 101h1v1h-1zM945 102h1v1h-1zM952 103h1v1h-1zM953 103h1v1h-1zM957 103h1v1h-1zM961 103h1v1h-1zM969 103h1v1h-1zM971 103h1v1h-1zM972 103h1v1h-1zM977 102h1v1h-1zM979 103h1v1h-1zM983 103h1v1h-1zM992 103h1v1h-1zM993 103h1v1h-1zM999 103h1v1h-1zM1000 103h1v1h-1zM1001 103h1v1h-1zM1004 103h1v1h-1zM949 105h1v1h-1zM965 105h1v1h-1zM971 105h1v1h-1zM972 105h1v1h-1zM976 105h1v1h-1zM977 105h1v1h-1zM980 105h1v1h-1zM984 105h1v1h-1zM992 104h1v1h-1zM993 105h1v1h-1zM998 105h1v1h-1zM1003 105h1v1h-1zM953 109h1v1h-1zM958 109h1v1h-1zM965 109h1v1h-1zM974 109h1v1h-1zM982 109h1v1h-1zM984 109h1v1h-1zM986 109h1v1h-1zM991 109h1v1h-1zM994 109h1v1h-1zM996 109h1v1h-1zM997 109h1v1h-1zM1001 109h1v1h-1zM1006 109h1v1h-1zM950 113h1v1h-1zM951 113h1v1h-1zM955 113h1v1h-1zM961 113h1v1h-1zM962 113h1v1h-1zM969 113h1v1h-1zM971 113h1v1h-1zM974 113h1v1h-1zM979 113h1v1h-1zM941 127h1v1h-1zM943 127h1v1h-1zM944 127h1v1h-1zM948 127h1v1h-1zM953 127h1v1h-1zM954 127h1v1h-1zM956 127h1v1h-1zM968 127h1v1h-1zM974 127h1v1h-1zM975 127h1v1h-1zM978 127h1v1h-1zM979 127h1v1h-1zM983 127h1v1h-1zM984 127h1v1h-1zM989 127h1v1h-1zM990 127h1v1h-1zM991 127h1v1h-1zM992 127h1v1h-1zM994 127h1v1h-1z"/><path fill="#008000" fill-opacity="0.5" d="M942 77h1v1h-1zM943 77h1v1h-1zM946 77h1v1h-1zM947 77h1v1h-1zM948 77h1v1h-1zM950 77h1v1h-1zM956 77h1v1h-1zM957 77h1v1h-1zM958 77h1v1h-1zM962 77h1v1h-1zM963 77h1v1h-1zM965 77h1v1h-1zM967 77h1v1h-1zM971 77h1v1h-1zM972 77h1v1h-1zM975 76h1v1h-1zM975 77h1v1h-1zM977 76h1v1h-1zM978 77h1v1h-1zM979 77h1v1h-1zM980 77h1v1h-1zM982 77h1v1h-1zM985 77h1v1h-1zM986 77h1v1h-1zM989 77h1v1h-1zM996 77h1v1h-1zM998 76h1v1h-1zM941 78h1v1h-1zM943 79h1v1h-1zM944 79h1v1h-1zM949 79h1v1h-1zM950 79h1v1h-1zM953 79h1v1h-1zM954 79h1v1h-1zM955 79h1v1h-1zM957 79h1v1h-1zM959 79h1v1h-1zM960 79h1v1h-1zM961 79h1v1h-1zM964 79h1v1h-1zM966 79h1v1h-1zM968 79h1v1h-1zM969 79h1v1h-1zM971 79h1v1h-1zM979 79h1v1h-1zM982 79h1v1h-1zM983 79h1v1h-1zM985 79h1v1h-1zM988 79h1v1h-1zM994 79h1v1h-1zM995 79h1v1h-1zM996 79h1v1h-1zM999 79h1v1h-1zM1002 79h1v1h-1zM1003 79h1v1h-1zM1007 79h1v1h-1zM1008 79h1v1h-1zM942 85h1v1h-1zM947 85h1v1h-1zM949 85h1v1h-1zM950 85h1v1h-1zM951 85h1v1h-1zM957 85h1v1h-1zM960 85h1v1h-1zM961 85h1v1h-1zM964 85h1v1h-1zM965 85h1v1h-1zM966 85h1v1h-1zM969 85h1v1h-1zM970 85h1v1h-1zM973 85h1v1h-1zM976 85h1v1h-1zM977 85h1v1h-1zM980 85h1v1h-1zM981 85h1v1h-1zM986 85h1v1h-1zM991 85h1v1h-1zM993 85h1v1h-1zM994 85h1v1h-1zM942 87h1v1h-1zM943 87h1v1h-1zM946 87h1v1h-1zM949 87h1v1h-1zM950 87h1v1h-1zM953 87h1v1h-1zM954 87h1v1h-1zM959 87h1v1h-1zM964 87h1v1h-1zM966 87h1v1h-1zM967 87h1v1h-1zM970 87h1v1h-1zM971 87h1v1h-1zM974 87h1v1h-1zM987 87h1v1h-1zM990 87h1v1h-1zM991 87h1v1h-1zM994 87h1v1h-1zM997 87h1v1h-1zM998 87h1v1h-1zM999 87h1v1h-1zM1004 87h1v1h-1zM1006 87h1v1h-1zM1008 87h1v1h-1zM945 93h1v1h-1zM947 93h1v1h-1zM950 93h1v1h-1zM951 93h1v1h-1zM954 93h1v1h-1zM955 93h1v1h-1zM957 93h1v1h-1zM959 93h1v1h-1zM962 93h1v1h-1zM964 93h1v1h-1zM965 93h1v1h-1zM967 93h1v1h-1zM968 93h1v1h-1zM971 93h1v1h-1zM973 93h1v1h-1zM974 93h1v1h-1zM975 93h1v1h-1zM976 93h1v1h-1zM983 93h1v1h-1zM985 93h1v1h-1zM988 93h1v1h-1zM991 93h1v1h-1zM992 93h1v1h-1zM996 93h1v1h-1zM997 93h1v1h-1zM999 93h1v1h-1zM1001 93h1v1h-1zM1004 93h1v1h-1zM1005 93h1v1h-1zM1008 93h1v1h-1zM946 95h1v1h-1zM952 95h1v1h-1zM953 95h1v1h-1zM955 95h1v1h-1zM959 95h1v1h-1zM960 95h1v1h-1zM961 95h1v1h-1zM968 95h1v1h-1zM969 95h1v1h-1zM973 95h1v1h-1zM974 95h1v1h-1zM976 95h1v1h-1zM978 95h1v1h-1zM980 95h1v1h-1zM982 95h1v1h-1zM983 95h1v1h-1zM985 95h1v1h-1zM986 95h1v1h-1zM988 95h1v1h-1zM991 95h1v1h-1zM992 95h1v1h-1zM993 95h1v1h-1zM996 95h1v1h-1zM997 95h1v1h-1zM1000 95h1v1h-1zM1003 95h1v1h-1zM1004 95h1v1h-1zM1007 95h1v1h-1zM1008 95h1v1h-1zM946 101h1v1h-1zM947 101h1v1h-1zM950 101h1v1h-1zM953 101h1v1h-1zM954 101h1v1h-1zM955 101h1v1h-1zM957 101h1v1h-1zM958 101h1v1h-1zM961 101h1v1h-1zM962 101h1v1h-1zM963 101h1v1h-1zM964 101h1v1h-1zM966 101h1v1h-1zM967 101h1v1h-1zM970 101h1v1h-1zM971 101h1v1h-1zM972 101h1v1h-1zM975 101h1v1h-1zM978 101h1v1h-1zM979 101h1v1h-1zM981 101h1v1h-1zM982 101h1v1h-1zM984 101h1v1h-1zM985 101h1v1h-1zM986 101h1v1h-1zM987 101h1v1h-1zM991 101h1v1h-1zM992 101h1v1h-1zM997 101h1v1h-1zM946 103h1v1h-1zM949 103h1v1h-1zM951 103h1v1h-1zM954 103h1v1h-1zM955 103h1v1h-1zM958 103h1v1h-1zM959 103h1v1h-1zM963 103h1v1h-1zM965 103h1v1h-1zM967 103h1v1h-1zM968 103h1v1h-1zM970 103h1v1h-1zM973 103h1v1h-1zM974 103h1v1h-1zM976 103h1v1h-1zM980 103h1v1h-1zM981 103h1v1h-1zM984 103h1v1h-1zM987 103h1v1h-1zM988 103h1v1h-1zM989 103h1v1h-1zM994 103h1v1h-1zM997 103h1v1h-1zM998 103h1v1h-1zM1002 103h1v1h-1zM1004 102h1v1h-1zM1005 103h1v1h-1zM1008 103h1v1h-1zM946 105h1v1h-1zM947 105h1v1h-1zM950 105h1v1h-1zM953 105h1v1h-1zM954 105h1v1h-1zM955 105h1v1h-1zM956 104h1v1h-1zM957 105h1v1h-1zM959 105h1v1h-1zM960 105h1v1h-1zM962 105h1v1h-1zM964 105h1v1h-1zM966 105h1v1h-1zM970 105h1v1h-1zM975 105h1v1h-1zM978 105h1v1h-1zM981 105h1v1h-1zM982 105h1v1h-1zM985 105h1v1h-1zM988 105h1v1h-1zM989 105h1v1h-1zM990 105h1v1h-1zM994 105h1v1h-1zM996 105h1v1h-1zM999 105h1v1h-1zM1001 105h1v1h-1zM1002 105h1v1h-1zM1004 105h1v1h-1zM1005 105h1v1h-1zM1006 105h1v1h-1zM1007 105h1v1h-1zM950 109h1v1h-1zM951 109h1v1h-1zM954 109h1v1h-1zM955 109h1v1h-1zM956 109h1v1h-1zM959 109h1v1h-1zM960 109h1v1h-1zM962 109h1v1h-1zM964 109h1v1h-1zM966 109h1v1h-1zM968 109h1v1h-1zM969 109h1v1h-1zM971 109h1v1h-1zM978 109h1v1h-1zM979 109h1v1h-1zM981 109h1v1h-1zM983 109h1v1h-1zM985 109h1v1h-1zM987 109h1v1h-1zM988 109h1v1h-1zM990 109h1v1h-1zM992 109h1v1h-1zM999 109h1v1h-1zM1002 109h1v1h-1zM1003 109h1v1h-1zM1007 109h1v1h-1zM949 112h1v1h-1zM949 113h1v1h-1zM952 113h1v1h-1zM954 113h1v1h-1zM957 113h1v1h-1zM960 113h1v1h-1zM963 113h1v1h-1zM964 113h1v1h-1zM965 113h1v1h-1zM967 113h1v1h-1zM968 113h1v1h-1zM972 113h1v1h-1zM975 113h1v1h-1zM976 113h1v1h-1zM978 113h1v1h-1zM980 113h1v1h-1zM942 127h1v1h-1zM947 127h1v1h-1zM949 127h1v1h-1zM950 127h1v1h-1zM951 127h1v1h-1zM957 127h1v1h-1zM960 127h1v1h-1zM961 127h1v1h-1zM964 127h1v1h-1zM965 127h1v1h-1zM966 127h1v1h-1zM969 127h1v1h-1zM970 127h1v1h-1zM973 127h1v1h-1zM976 127h1v1h-1zM977 127h1v1h-1zM980 127h1v1h-1zM981 127h1v1h-1zM986 127h1v1h-1zM987 127h1v1h-1zM988 127h1v1h-1zM993 127h1v1h-1zM995 127h1v1h-1zM996 127h1v1h-1z"/><path fill="#008000" fill-opacity="0.6" d="M941 76h1v1h-1zM997 76h1v1h-1zM976 79h1v1h-1zM963 85h1v1h-1zM945 94h1v1h-1zM963 95h1v1h-1zM990 95h1v1h-1zM945 100h1v1h-1zM945 103h1v1h-1zM947 103h1v1h-1zM991 103h1v1h-1zM945 104h1v1h-1zM949 108h1v1h-1zM973 109h1v1h-1zM963 127h1v1h-1z"/><path fill="#008000" fill-opacity="0.7" d="M945 77h1v1h-1zM942 79h1v1h-1zM952 79h1v1h-1zM946 85h1v1h-1zM986 87h1v1h-1zM995 87h1v1h-1zM996 87h1v1h-1zM987 93h1v1h-1zM951 101h1v1h-1zM952 101h1v1h-1zM962 103h1v1h-1zM966 103h1v1h-1zM985 103h1v1h-1zM986 103h1v1h-1zM1006 103h1v1h-1zM1007 103h1v1h-1zM951 105h1v1h-1zM952 105h1v1h-1zM963 105h1v1h-1zM969 105h1v1h-1zM974 105h1v1h-1zM986 105h1v1h-1zM987 105h1v1h-1zM998 109h1v1h-1zM1008 109h1v1h-1zM959 113h1v1h-1zM946 127h1v1h-1z"/><path fill="#267f99" fill-opacity="0.1" d="M981 88h1v1h-1zM985 88h1v1h-1zM991 88h1v1h-1zM994 88h1v1h-1z"/><path fill="#267f99" fill-opacity="0.2" d="M976 88h1v1h-1z"/><path fill="#267f99" fill-opacity="0.4" d="M972 89h1v1h-1zM973 89h1v1h-1zM974 89h1v1h-1zM980 89h1v1h-1zM981 89h1v1h-1zM984 89h1v1h-1zM985 89h1v1h-1zM988 89h1v1h-1zM991 89h1v1h-1zM993 89h1v1h-1zM994 89h1v1h-1z"/><path fill="#267f99" fill-opacity="0.5" d="M975 89h1v1h-1zM976 89h1v1h-1zM977 89h1v1h-1zM979 89h1v1h-1zM982 89h1v1h-1zM983 89h1v1h-1zM986 89h1v1h-1zM987 89h1v1h-1zM988 88h1v1h-1zM989 89h1v1h-1zM990 89h1v1h-1zM992 89h1v1h-1z"/><path fill="#267f99" fill-opacity="0.6" d="M979 88h1v1h-1z"/><path fill="#795e26" fill-opacity="0.1" d="M956 88h1v1h-1zM957 88h1v1h-1zM960 88h1v1h-1zM978 106h1v1h-1zM980 106h1v1h-1zM971 114h1v1h-1zM972 114h1v1h-1zM958 128h1v1h-1zM959 128h1v1h-1zM962 128h1v1h-1z"/><path fill="#795e26" fill-opacity="0.2" d="M989 106h1v1h-1zM961 114h1v1h-1zM967 120h1v1h-1zM954 128h1v1h-1z"/><path fill="#795e26" fill-opacity="0.3" d="M954 96h1v1h-1zM954 97h1v1h-1zM975 107h1v1h-1zM982 107h1v1h-1zM964 115h1v1h-1zM966 115h1v1h-1zM968 115h1v1h-1z"/><path fill="#795e26" fill-opacity="0.4" d="M955 89h1v1h-1zM956 89h1v1h-1zM957 89h1v1h-1zM958 89h1v1h-1zM960 89h1v1h-1zM978 107h1v1h-1zM979 107h1v1h-1zM980 107h1v1h-1zM983 107h1v1h-1zM960 115h1v1h-1zM966 114h1v1h-1zM971 115h1v1h-1zM972 115h1v1h-1zM977 115h1v1h-1zM978 115h1v1h-1zM966 121h1v1h-1zM957 129h1v1h-1zM958 129h1v1h-1zM959 129h1v1h-1zM960 129h1v1h-1zM962 129h1v1h-1z"/><path fill="#795e26" fill-opacity="0.5" d="M954 89h1v1h-1zM959 89h1v1h-1zM961 89h1v1h-1zM955 97h1v1h-1zM956 97h1v1h-1zM976 107h1v1h-1zM977 107h1v1h-1zM981 107h1v1h-1zM983 106h1v1h-1zM984 107h1v1h-1zM987 107h1v1h-1zM988 107h1v1h-1zM989 107h1v1h-1zM961 115h1v1h-1zM962 115h1v1h-1zM964 114h1v1h-1zM965 115h1v1h-1zM967 115h1v1h-1zM970 115h1v1h-1zM973 115h1v1h-1zM974 115h1v1h-1zM975 114h1v1h-1zM976 115h1v1h-1zM979 115h1v1h-1zM980 115h1v1h-1zM981 115h1v1h-1zM964 121h1v1h-1zM965 121h1v1h-1zM967 121h1v1h-1zM954 129h1v1h-1zM955 129h1v1h-1zM956 129h1v1h-1zM961 129h1v1h-1zM963 129h1v1h-1z"/><path fill="#795e26" fill-opacity="0.6" d="M963 115h1v1h-1zM975 115h1v1h-1z"/><path fill="#795e26" fill-opacity="0.7" d="M985 107h1v1h-1zM986 107h1v1h-1zM969 115h1v1h-1z"/><path fill="#a31515" fill-opacity="0.1" d="M965 96h1v1h-1zM969 96h1v1h-1zM970 96h1v1h-1zM974 97h1v1h-1zM983 96h1v1h-1zM987 96h1v1h-1zM991 97h1v1h-1zM992 96h1v1h-1zM995 96h1v1h-1zM996 97h1v1h-1zM997 96h1v1h-1zM999 97h1v1h-1zM1001 96h1v1h-1zM994 106h1v1h-1zM998 106h1v1h-1zM1001 107h1v1h-1z"/><path fill="#a31515" fill-opacity="0.2" d="M962 80h1v1h-1zM967 80h1v1h-1zM969 80h1v1h-1zM958 96h1v1h-1zM991 106h1v1h-1zM1002 106h1v1h-1zM983 114h1v1h-1zM994 114h1v1h-1zM995 114h1v1h-1zM995 115h1v1h-1zM996 114h1v1h-1z"/><path fill="#a31515" fill-opacity="0.3" d="M963 97h1v1h-1zM967 96h1v1h-1zM967 97h1v1h-1zM979 97h1v1h-1zM1004 106h1v1h-1zM1004 107h1v1h-1zM1005 106h1v1h-1zM1005 107h1v1h-1zM1007 106h1v1h-1zM984 114h1v1h-1zM986 114h1v1h-1zM986 115h1v1h-1zM987 114h1v1h-1zM987 115h1v1h-1zM990 114h1v1h-1zM992 115h1v1h-1zM993 114h1v1h-1zM993 115h1v1h-1z"/><path fill="#a31515" fill-opacity="0.4" d="M963 81h1v1h-1zM964 81h1v1h-1zM965 81h1v1h-1zM959 97h1v1h-1zM965 97h1v1h-1zM969 97h1v1h-1zM970 97h1v1h-1zM973 97h1v1h-1zM976 97h1v1h-1zM982 97h1v1h-1zM983 97h1v1h-1zM986 97h1v1h-1zM987 97h1v1h-1zM992 97h1v1h-1zM994 97h1v1h-1zM995 97h1v1h-1zM997 97h1v1h-1zM998 97h1v1h-1zM1001 97h1v1h-1zM1002 97h1v1h-1zM993 107h1v1h-1zM994 107h1v1h-1zM997 107h1v1h-1zM998 107h1v1h-1z"/><path fill="#a31515" fill-opacity="0.5" d="M966 81h1v1h-1zM967 81h1v1h-1zM968 81h1v1h-1zM959 96h1v1h-1zM960 97h1v1h-1zM961 97h1v1h-1zM962 97h1v1h-1zM964 97h1v1h-1zM966 97h1v1h-1zM968 97h1v1h-1zM971 97h1v1h-1zM972 97h1v1h-1zM977 97h1v1h-1zM978 97h1v1h-1zM981 97h1v1h-1zM984 97h1v1h-1zM985 97h1v1h-1zM988 97h1v1h-1zM989 97h1v1h-1zM991 96h1v1h-1zM993 97h1v1h-1zM999 96h1v1h-1zM1004 97h1v1h-1zM1005 97h1v1h-1zM1008 97h1v1h-1zM992 107h1v1h-1zM995 107h1v1h-1zM996 107h1v1h-1zM999 107h1v1h-1zM1000 107h1v1h-1zM1002 107h1v1h-1zM1003 107h1v1h-1zM1006 107h1v1h-1zM1008 107h1v1h-1zM984 115h1v1h-1zM985 115h1v1h-1zM988 115h1v1h-1zM991 115h1v1h-1zM994 115h1v1h-1z"/><path fill="#a31515" fill-opacity="0.6" d="M1006 97h1v1h-1zM1007 107h1v1h-1zM990 115h1v1h-1z"/><path fill="#af00db" fill-opacity="0.1" d="M938 80h1v1h-1zM943 80h1v1h-1zM943 88h1v1h-1zM943 128h1v1h-1z"/><path fill="#af00db" fill-opacity="0.3" d="M942 81h1v1h-1zM957 81h1v1h-1zM958 81h1v1h-1zM942 89h1v1h-1zM942 129h1v1h-1z"/><path fill="#af00db" fill-opacity="0.4" d="M938 81h1v1h-1zM943 81h1v1h-1zM948 81h1v1h-1zM957 80h1v1h-1zM939 89h1v1h-1zM943 89h1v1h-1zM939 129h1v1h-1zM943 129h1v1h-1z"/><path fill="#af00db" fill-opacity="0.5" d="M940 81h1v1h-1zM941 81h1v1h-1zM947 81h1v1h-1zM959 81h1v1h-1zM938 89h1v1h-1zM940 89h1v1h-1zM941 89h1v1h-1zM938 129h1v1h-1zM940 129h1v1h-1zM941 129h1v1h-1z"/><path fill="#af00db" fill-opacity="0.7" d="M939 81h1v1h-1zM960 81h1v1h-1z"/></svg>

<!-- scrollbars -->
<div class="abs" style="left:1009px;top:76px;width:9px;height:385px;background:#c4c4c4;border-top:1px solid #a9a9a9;border-left:1px solid #a9a9a9;box-sizing:border-box"></div>
<div class="abs" style="left:1009px;top:461px;width:1px;height:282px;background:#d0d2d3"></div>
<div class="abs" style="left:1009px;top:356px;width:9px;height:2px;background:#505050"></div>
<div class="abs" style="left:415px;top:733px;width:384px;height:10px;background:#c4c4c4"></div>

<!-- mouse I-beam -->
<svg class="abs" style="left:697px;top:577px" width="12" height="22" viewBox="0 0 12 22"><path d="M2 3.4 Q4.4 3.4 5.4 5.2 Q6.4 3.4 8.8 3.4 M5.4 5 V16.8 M4.1 11.3 H6.7 M2 18.4 Q4.4 18.4 5.4 16.6 Q6.4 18.4 8.8 18.4" fill="none" stroke="#000" stroke-width="1.15"/></svg>

<!-- status bar -->
<svg class="abs" style="left:13px;top:748px" width="10" height="13" viewBox="0 0 10 13">
  <g fill="none" stroke="#3e4248" stroke-width="1.2">
    <circle cx="2" cy="2" r="1.4"/><circle cx="2" cy="11" r="1.4"/><circle cx="8" cy="3.5" r="1.4"/>
    <path d="M2 3.4 V9.6 M8 4.9 Q8 8 2.8 9.8"/>
  </g>
</svg>
<div class="st" style="left:27px">master*</div>
<svg class="abs" style="left:87px;top:750px" width="54" height="12" viewBox="0 0 54 12">
  <circle cx="6.5" cy="5.5" r="6" fill="#3e4248"/>
  <path d="M4 3 L9 8 M9 3 L4 8" stroke="#f9fafa" stroke-width="1.5"/>
  <path d="M35.5 0 L41.5 11 H29.5 Z" fill="#3e4248"/>
  <path d="M35.5 3.5 V7.5 M35.5 8.7 V10" stroke="#f9fafa" stroke-width="1.3"/>
</svg>
<div class="st" style="left:104px">0</div>
<div class="st" style="left:132px">0</div>
<div class="st" style="left:602px">Ln 28, Col 1</div>
<div class="st" style="left:685px">Tab Size: 4</div>
<div class="st" style="left:763px">UTF-8</div>
<div class="st" style="left:815px">LF</div>
<div class="st" style="left:845px;letter-spacing:0.4px">TypeScript</div>
<div class="st" style="left:922px">3.5.2</div>
<svg class="abs" style="left:966px;top:747px" width="42" height="15" viewBox="0 0 42 15">
  <circle cx="7" cy="7" r="6.5" fill="#3e4248"/>
  <circle cx="4.8" cy="5.3" r="1" fill="#f9fafa"/><circle cx="9.2" cy="5.3" r="1" fill="#f9fafa"/>
  <path d="M3.8 8 Q7 11.5 10.2 8" fill="none" stroke="#f9fafa" stroke-width="1.3"/>
  <path d="M35.5 1 Q35.5 0 36 0 Q40 1 40 6 V9.5 L42 11 V12 H29 V11 L31 9.5 V6 Q31 1 35 0 Z" fill="#3e4248"/>
  <path d="M34 12.5 H38 Q37.5 14.5 36 14.5 Q34.5 14.5 34 12.5 Z" fill="#3e4248"/>
</svg>
</body></html>
